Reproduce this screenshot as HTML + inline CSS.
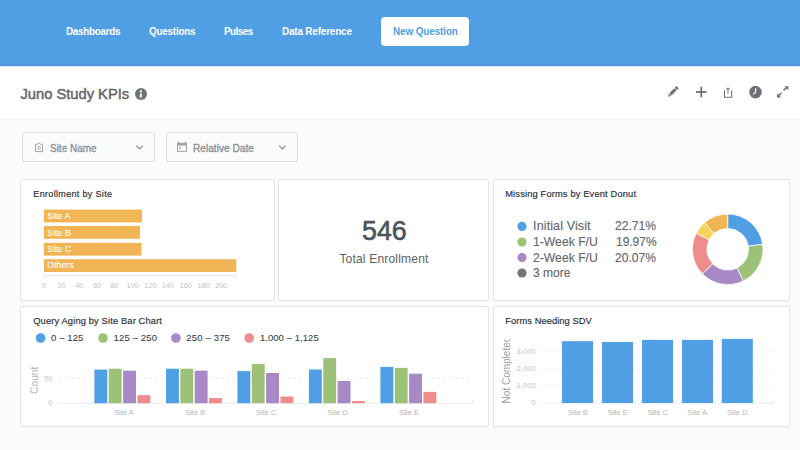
<!DOCTYPE html>
<html><head><meta charset="utf-8">
<style>
html,body{margin:0;padding:0;}
body{width:800px;height:450px;overflow:hidden;background:#F9FBFC;position:relative;font-family:"Liberation Sans",sans-serif;}
.t{position:absolute;white-space:pre;line-height:1;font-family:"Liberation Sans",sans-serif;}
.abs{position:absolute;}
.card{position:absolute;background:#fff;border:1px solid #E3E5E8;border-radius:2px;box-sizing:border-box;box-shadow:0 1px 0 rgba(0,0,0,0.02);}
.fbox{position:absolute;background:#F9FBFC;border:1px solid #DADCDF;border-radius:2.5px;box-sizing:border-box;}
svg{position:absolute;left:0;top:0;}
</style></head><body>
<div class="abs" style="left:0;top:0;width:800px;height:66px;background:#509EE3;"></div>
<div class="abs" style="left:0;top:65px;width:800px;height:1px;background:#4C96DA;"></div>
<div class="abs" style="left:381px;top:17px;width:88px;height:29px;background:#fff;border-radius:4px;"></div>
<div class="abs" style="left:0;top:66px;width:800px;height:54px;background:#fff;"></div>
<div class="abs" style="left:0;top:66px;width:800px;height:1px;background:#D6E8F8;"></div>
<div class="abs" style="left:0;top:119px;width:800px;height:1px;background:#F1F3F5;"></div>

<div class="fbox" style="left:22px;top:132px;width:133px;height:30px;"></div>
<div class="fbox" style="left:166px;top:132px;width:132px;height:30px;"></div>

<div class="card" style="left:20px;top:179px;width:255px;height:122px;"></div>
<div class="card" style="left:278px;top:179px;width:211px;height:122px;"></div>
<div class="card" style="left:493px;top:179px;width:297px;height:122px;"></div>
<div class="card" style="left:20px;top:306px;width:469px;height:121px;"></div>
<div class="card" style="left:493px;top:306px;width:297px;height:121px;"></div>

<svg width="800" height="450" viewBox="0 0 800 450" style="font-family:'Liberation Sans',sans-serif;">
 <!-- info icon -->
 <circle cx="141" cy="94" r="5.95" fill="#6f7176"/>
 <rect x="139.85" y="93.7" width="2" height="3.8" fill="#fff"/>
 <circle cx="140.85" cy="91.5" r="1.15" fill="#fff"/>
 <!-- pencil -->
 <g transform="translate(668 96.8) rotate(-45)" fill="#6f7176">
  <path d="M0 0 L2.7 -1.6 V1.6 Z"/>
  <rect x="3.3" y="-1.6" width="7.2" height="3.2"/>
  <rect x="11.1" y="-1.6" width="2.5" height="3.2"/>
 </g>
 <!-- plus -->
 <rect x="696" y="91.1" width="10.5" height="1.8" fill="#6f7176"/>
 <rect x="700.35" y="86.8" width="1.8" height="10.4" fill="#6f7176"/>
 <!-- share -->
 <path d="M724.5 90.5 V97.3 H731.6 V90.5" fill="none" stroke="#6f7176" stroke-width="1.1"/>
 <path d="M728 94 V88.3" fill="none" stroke="#8a8c90" stroke-width="1.1"/>
 <path d="M726 89.6 L728 87.2 L730 89.6 Z" fill="#6f7176"/>
 <!-- clock -->
 <circle cx="755.5" cy="92.1" r="6.3" fill="#6f7176"/>
 <path d="M755.6 88.2 V92.3 L753.3 94.2" fill="none" stroke="#fff" stroke-width="1.2"/>
 <!-- expand -->
 <path d="M784.3 86.2 H788.4 V90.3 Z M777 93.3 V97.4 H781.1 Z" fill="#6f7176"/>
 <path d="M783.6 90.4 L786.2 87.8 M778.8 95.6 L781.4 93.0" stroke="#6f7176" stroke-width="1.6"/>

 <!-- filter icons -->
 <g fill="none" stroke="#a0a2a6" stroke-width="1">
  <path d="M35.5 144.3 H37.3 L38.2 143.2 H39.6 L40.5 144.3 H42.5 V151.6 H35.5 Z"/>
  <path d="M37.2 146.6 H40.8 M37.2 148.8 H40.8"/>
 </g>
 <g fill="#a0a2a6">
  <rect x="177" y="142.8" width="10" height="2.8"/>
  <rect x="177" y="142.8" width="1" height="9"/>
  <rect x="186" y="142.8" width="1" height="9"/>
  <rect x="177" y="150.8" width="10" height="1"/>
  <rect x="178" y="141.6" width="1" height="1.4"/>
  <rect x="185" y="141.6" width="1" height="1.4"/>
  <rect x="179" y="147.2" width="1.8" height="1.6"/>
 </g>
 <path d="M136.3 145.6 L139.6 148.9 L142.9 145.6" fill="none" stroke="#8a8c90" stroke-width="1.3"/>
 <path d="M279 145.6 L282.3 148.9 L285.6 145.6" fill="none" stroke="#8a8c90" stroke-width="1.3"/>

 <!-- enrollment bars -->
 <g fill="#F1B556">
  <rect x="44" y="209.6" width="98" height="12.8"/>
  <rect x="44" y="226" width="96" height="12.8"/>
  <rect x="44" y="242.8" width="97.5" height="12.8"/>
  <rect x="44" y="259.2" width="192.3" height="12.8"/>
 </g>
 <g fill="#fff" font-size="8.8" letter-spacing="0" stroke="#fff" stroke-width="0.1">
  <text x="47.3" y="219.2">Site A</text>
  <text x="47.3" y="235.6">Site B</text>
  <text x="47.3" y="252.1">Site C</text>
  <text x="47.3" y="268">Others</text>
 </g>
 <path d="M44 275.3 H236.3 M44.3 275 V279 M236 275 V279" stroke="#E6E8EA" stroke-width="1" fill="none"/>
 <g fill="#C2C5C8" font-size="7.6" text-anchor="middle" letter-spacing="-0.2">
  <text x="43.9" y="288.2">0</text><text x="61.5" y="288.2">20</text><text x="79.3" y="288.2">40</text>
  <text x="96.9" y="288.2">60</text><text x="114.3" y="288.2">80</text><text x="132.6" y="288.2">100</text>
  <text x="150.4" y="288.2">120</text><text x="167.8" y="288.2">140</text><text x="185.6" y="288.2">160</text>
  <text x="203.5" y="288.2">180</text><text x="221" y="288.2">200</text>
 </g>

 <!-- donut -->
 <g transform="translate(727.7 249.3)" stroke="#fff" stroke-width="0.8">
  <path d="M0.00 -35.30 A35.3 35.3 0 0 1 34.94 -5.03 L20.59 -2.97 A20.8 20.8 0 0 0 0.00 -20.80 Z" fill="#509EE3"/>
<path d="M34.94 -5.03 A35.3 35.3 0 0 1 15.64 31.65 L9.22 18.65 A20.8 20.8 0 0 0 20.59 -2.97 Z" fill="#9CC177"/>
<path d="M15.64 31.65 A35.3 35.3 0 0 1 -25.39 24.52 L-14.96 14.45 A20.8 20.8 0 0 0 9.22 18.65 Z" fill="#A989C5"/>
<path d="M-25.39 24.52 A35.3 35.3 0 0 1 -31.45 -16.03 L-18.53 -9.44 A20.8 20.8 0 0 0 -14.96 14.45 Z" fill="#EF8C8C"/>
<path d="M-31.45 -16.03 A35.3 35.3 0 0 1 -23.16 -26.64 L-13.65 -15.70 A20.8 20.8 0 0 0 -18.53 -9.44 Z" fill="#F9D45C"/>
<path d="M-23.16 -26.64 A35.3 35.3 0 0 1 -0.00 -35.30 L-0.00 -20.80 A20.8 20.8 0 0 0 -13.65 -15.70 Z" fill="#F1B556"/>
 </g>

 <!-- legend dots -->
 <circle cx="522" cy="226.4" r="4.6" fill="#509EE3"/>
 <circle cx="522" cy="242" r="4.6" fill="#9CC177"/>
 <circle cx="522" cy="257.6" r="4.6" fill="#A989C5"/>
 <circle cx="522" cy="273" r="4.6" fill="#727479"/>

 <!-- query aging legend dots -->
 <circle cx="40.6" cy="338" r="4.8" fill="#509EE3"/>
 <circle cx="103" cy="338" r="4.8" fill="#9CC177"/>
 <circle cx="175.9" cy="338" r="4.8" fill="#A989C5"/>
 <circle cx="249.2" cy="338" r="4.8" fill="#EF8C8C"/>

 <!-- query aging chart -->
 <path d="M59 378.2 H473" stroke="#E9EBED" stroke-width="1" stroke-dasharray="3 3"/>
 <path d="M58.5 403.5 H473 M472.5 399.5 V403.5" stroke="#ECEEF0" stroke-width="1" fill="none"/>
 <rect x="94.40" y="369.6" width="12.9" height="33.60" fill="#509EE3"/>
<rect x="108.75" y="368.7" width="12.9" height="34.50" fill="#9CC177"/>
<rect x="123.10" y="370.7" width="12.9" height="32.50" fill="#A989C5"/>
<rect x="137.45" y="395.1" width="12.9" height="8.10" fill="#EF8C8C"/>
<rect x="166.00" y="368.7" width="12.9" height="34.50" fill="#509EE3"/>
<rect x="180.35" y="368.7" width="12.9" height="34.50" fill="#9CC177"/>
<rect x="194.70" y="370.7" width="12.9" height="32.50" fill="#A989C5"/>
<rect x="209.05" y="398.0" width="12.9" height="5.20" fill="#EF8C8C"/>
<rect x="237.40" y="371.1" width="12.9" height="32.10" fill="#509EE3"/>
<rect x="251.75" y="364.0" width="12.9" height="39.20" fill="#9CC177"/>
<rect x="266.10" y="373.0" width="12.9" height="30.20" fill="#A989C5"/>
<rect x="280.45" y="396.5" width="12.9" height="6.70" fill="#EF8C8C"/>
<rect x="308.90" y="369.5" width="12.9" height="33.70" fill="#509EE3"/>
<rect x="323.25" y="358.1" width="12.9" height="45.10" fill="#9CC177"/>
<rect x="337.60" y="380.9" width="12.9" height="22.30" fill="#A989C5"/>
<rect x="351.95" y="401.0" width="12.9" height="2.20" fill="#EF8C8C"/>
<rect x="380.40" y="366.9" width="12.9" height="36.30" fill="#509EE3"/>
<rect x="394.75" y="367.9" width="12.9" height="35.30" fill="#9CC177"/>
<rect x="409.10" y="373.7" width="12.9" height="29.50" fill="#A989C5"/>
<rect x="423.45" y="391.9" width="12.9" height="11.30" fill="#EF8C8C"/>
 <g fill="#C2C5C8" font-size="7.6" text-anchor="end">
  <text x="52.6" y="381">50</text><text x="52.2" y="405.4">0</text>
 </g>
 <text transform="translate(38.3 380.3) rotate(-90)" text-anchor="middle" font-size="10.2" fill="#B3B6B9">Count</text>
 <g fill="#B5B8BB" font-size="7.8" text-anchor="middle" letter-spacing="-0.1">
  <text x="123.8" y="414.6">Site A</text><text x="195" y="414.6">Site B</text><text x="266" y="414.6">Site C</text>
  <text x="337.5" y="414.6">Site D</text><text x="409" y="414.6">Site E</text>
 </g>

 <!-- forms chart -->
 <g stroke="#F0F1F3" stroke-width="1" stroke-dasharray="3 3">
  <path d="M541.5 351.6 H773.6"/><path d="M541.5 368.8 H773.6"/><path d="M541.5 385.6 H773.6"/>
 </g>
 <path d="M541.5 403.3 H773.6 M773.3 399.5 V403.3" stroke="#ECEEF0" stroke-width="1" fill="none"/>
 <g fill="#509EE3">
  <rect x="562" y="341.2" width="31" height="61.8"/>
  <rect x="602" y="342" width="31" height="61"/>
  <rect x="642" y="339.9" width="31" height="63.1"/>
  <rect x="682" y="339.9" width="31" height="63.1"/>
  <rect x="721.8" y="338.9" width="31" height="64.1"/>
 </g>
 <g fill="#C2C5C8" font-size="7.6" text-anchor="end">
  <text x="535.6" y="354.4">3,000</text><text x="535.6" y="371.4">2,000</text><text x="535.6" y="388.2">1,000</text><text x="535.6" y="405.4">0</text>
 </g>
 <g fill="#B5B8BB" font-size="7.8" text-anchor="middle" letter-spacing="-0.1">
  <text x="577.8" y="414.6">Site B</text><text x="617.6" y="414.6">Site E</text><text x="657.7" y="414.6">Site C</text>
  <text x="697.2" y="414.6">Site A</text><text x="737.3" y="414.6">Site D</text>
 </g>
 <svg x="496" y="339.2" width="20" height="70" viewBox="496 339.2 20 70">
  <text transform="translate(510.3 403.4) rotate(-90)" text-anchor="start" font-size="10" fill="#9a9da1">Not Completed</text>
 </svg>
</svg>
<div class="t" style="left:65.71px;top:26.48px;font-size:10.5px;font-weight:700;color:#fff;transform:scaleX(0.9400);transform-origin:0 0;letter-spacing:-0.290px;">Dashboards</div>
<div class="t" style="left:148.91px;top:26.48px;font-size:10.5px;font-weight:700;color:#fff;transform:scaleX(0.9400);transform-origin:0 0;letter-spacing:-0.223px;">Questions</div>
<div class="t" style="left:224.11px;top:26.48px;font-size:10.5px;font-weight:700;color:#fff;transform:scaleX(0.9400);transform-origin:0 0;letter-spacing:-0.561px;">Pulses</div>
<div class="t" style="left:282.21px;top:26.48px;font-size:10.5px;font-weight:700;color:#fff;transform:scaleX(0.9400);transform-origin:0 0;letter-spacing:-0.162px;">Data Reference</div>
<div class="t" style="left:392.91px;top:26.48px;font-size:10.5px;font-weight:700;color:#509EE3;transform:scaleX(0.9400);transform-origin:0 0;letter-spacing:-0.089px;">New Question</div>
<div class="t" style="left:20.41px;top:87.10px;font-size:14.7px;font-weight:400;color:#62666b;transform:scaleX(1.0000);transform-origin:0 0;-webkit-text-stroke:0.45px #62666b;letter-spacing:0.013px;">Juno Study KPIs</div>
<div class="t" style="left:49.50px;top:142.59px;font-size:10.6px;font-weight:400;color:#8b8e92;transform:scaleX(0.9420);transform-origin:0 0;-webkit-text-stroke:0.3px #8b8e92;letter-spacing:0.000px;">Site Name</div>
<div class="t" style="left:192.99px;top:142.59px;font-size:10.6px;font-weight:400;color:#8b8e92;transform:scaleX(0.9578);transform-origin:0 0;-webkit-text-stroke:0.3px #8b8e92;letter-spacing:0.000px;">Relative Date</div>
<div class="t" style="left:33.34px;top:190.10px;font-size:9.0px;font-weight:400;color:#2e3338;transform:scaleX(1.0000);transform-origin:0 0;-webkit-text-stroke:0.18px #2e3338;letter-spacing:0.334px;">Enrollment by Site</div>
<div class="t" style="left:361.53px;top:217.95px;font-size:27px;font-weight:400;color:#4c545b;transform:scaleX(0.9929);transform-origin:0 0;-webkit-text-stroke:0.6px #4c545b;letter-spacing:0.000px;">546</div>
<div class="t" style="left:339.42px;top:252.72px;font-size:12.1px;font-weight:400;color:#5d6166;transform:scaleX(1.0000);transform-origin:0 0;letter-spacing:0.150px;">Total Enrollment</div>
<div class="t" style="left:505.23px;top:190.09px;font-size:9.3px;font-weight:400;color:#2e3338;transform:scaleX(1.0000);transform-origin:0 0;-webkit-text-stroke:0.18px #2e3338;letter-spacing:0.154px;">Missing Forms by Event Donut</div>
<div class="t" style="left:533.10px;top:220.38px;font-size:12.5px;font-weight:400;color:#64686d;transform:scaleX(1.0000);transform-origin:0 0;-webkit-text-stroke:0.15px #64686d;letter-spacing:0.113px;">Initial Visit</div>
<div class="t" style="left:533.11px;top:236.18px;font-size:12.5px;font-weight:400;color:#64686d;transform:scaleX(0.9747);transform-origin:0 0;-webkit-text-stroke:0.15px #64686d;letter-spacing:0.000px;">1-Week F/U</div>
<div class="t" style="left:533.11px;top:251.77px;font-size:12.5px;font-weight:400;color:#64686d;transform:scaleX(0.9747);transform-origin:0 0;-webkit-text-stroke:0.15px #64686d;letter-spacing:0.000px;">2-Week F/U</div>
<div class="t" style="left:533.12px;top:266.77px;font-size:12.5px;font-weight:400;color:#64686d;transform:scaleX(0.9603);transform-origin:0 0;-webkit-text-stroke:0.15px #64686d;letter-spacing:0.000px;">3 more</div>
<div class="t" style="left:615.12px;top:220.38px;font-size:12.5px;font-weight:400;color:#64686d;transform:scaleX(0.9660);transform-origin:0 0;-webkit-text-stroke:0.15px #64686d;letter-spacing:0.000px;">22.71%</div>
<div class="t" style="left:615.52px;top:236.18px;font-size:12.5px;font-weight:400;color:#64686d;transform:scaleX(0.9564);transform-origin:0 0;-webkit-text-stroke:0.15px #64686d;letter-spacing:0.000px;">19.97%</div>
<div class="t" style="left:615.12px;top:251.77px;font-size:12.5px;font-weight:400;color:#64686d;transform:scaleX(0.9660);transform-origin:0 0;-webkit-text-stroke:0.15px #64686d;letter-spacing:0.000px;">20.07%</div>
<div class="t" style="left:33.23px;top:316.50px;font-size:9.3px;font-weight:400;color:#2e3338;transform:scaleX(1.0000);transform-origin:0 0;-webkit-text-stroke:0.18px #2e3338;letter-spacing:0.150px;">Query Aging by Site Bar Chart</div>
<div class="t" style="left:51.02px;top:333.32px;font-size:9.5px;font-weight:400;color:#35393e;transform:scaleX(1.0000);transform-origin:0 0;-webkit-text-stroke:0.06px #35393e;letter-spacing:0.109px;">0 – 125</div>
<div class="t" style="left:113.62px;top:333.32px;font-size:9.5px;font-weight:400;color:#35393e;transform:scaleX(1.0000);transform-origin:0 0;-webkit-text-stroke:0.06px #35393e;letter-spacing:0.137px;">125 – 250</div>
<div class="t" style="left:186.22px;top:333.32px;font-size:9.5px;font-weight:400;color:#35393e;transform:scaleX(1.0000);transform-origin:0 0;-webkit-text-stroke:0.06px #35393e;letter-spacing:0.174px;">250 – 375</div>
<div class="t" style="left:259.92px;top:333.32px;font-size:9.5px;font-weight:400;color:#35393e;transform:scaleX(1.0000);transform-origin:0 0;-webkit-text-stroke:0.06px #35393e;letter-spacing:0.054px;">1,000 – 1,125</div>
<div class="t" style="left:505.33px;top:316.70px;font-size:9.3px;font-weight:400;color:#2e3338;transform:scaleX(1.0000);transform-origin:0 0;-webkit-text-stroke:0.18px #2e3338;letter-spacing:0.067px;">Forms Needing SDV</div>
</body></html>
